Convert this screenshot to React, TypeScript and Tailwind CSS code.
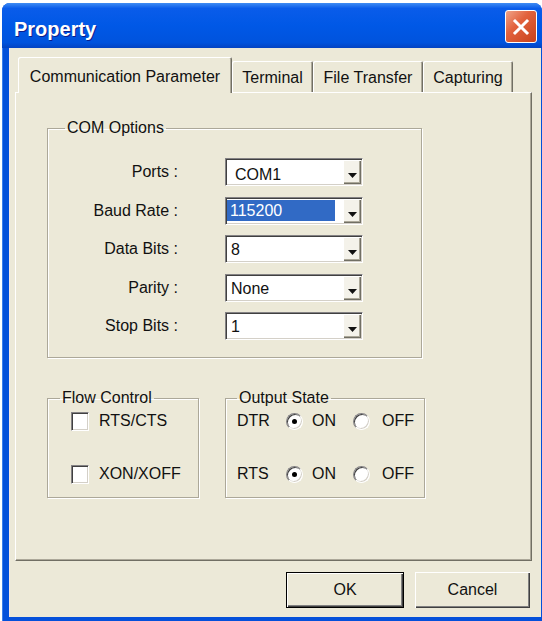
import { ReactNode } from "react";

const FONT = "font-['Liberation_Sans',Arial,sans-serif]";

type Option = {
    label: string,
    value: string,
    selected?: boolean,
    indent?: string
}

const comOptions: Option[] = [
    { label: "Ports :", value: "COM1", indent: "pl-[8px] pt-[6px]" },
    { label: "Baud Rate :", value: "115200", selected: true },
    { label: "Data Bits :", value: "8" },
    { label: "Parity :", value: "None" },
    { label: "Stop Bits :", value: "1" },
];

const tabs = ["Communication Parameter", "Terminal", "File Transfer", "Capturing"];
const tabWidths = ["w-[214px]", "w-[81px]", "w-[110px]", "w-[90px]"];

// sunken 3D edge used by combos, checkboxes and radios
const sunken = "border border-t-[#848284] border-l-[#848284] border-r-white border-b-white shadow-[inset_1px_1px_0_#404040,inset_-1px_-1px_0_#D4D0C8]";

function ComboBox({ option }: { option: Option }) {
    return (
        <div className={`flex h-[28px] w-[138px] bg-white p-[1px] ${sunken}`}>
            <div className="flex flex-1 items-center">
                {option.selected ? (
                    <span className="flex h-[21px] w-[108px] items-center bg-[#316AC5] pl-[3px] text-white">{option.value}</span>
                ) : (
                    <span className={option.indent ?? "pl-[4px] pt-[2px]"}>{option.value}</span>
                )}
            </div>
            <div className="flex w-[18px] items-center justify-center bg-[#F4F2EA] pt-[7px] shadow-[inset_1px_1px_0_#fff,inset_-1px_-1px_0_#716F64,inset_-2px_-2px_0_#ACA899]">
                <svg width="9" height="5" viewBox="0 0 9 5">
                    <path d="M0 0h9L4.5 5z" fill="#111" />
                </svg>
            </div>
        </div>
    );
}

function GroupBox({ title, className, legend, children }: { title: string, className: string, legend: string, children: ReactNode }) {
    return (
        <fieldset className={`border border-[#ACA899] shadow-[inset_1px_1px_0_#fff,1px_1px_0_#fff] ${className}`}>
            <legend className={`px-[2px] leading-[18px] ${legend}`}>{title}</legend>
            {children}
        </fieldset>
    );
}

function CheckBox({ label }: { label: string }) {
    return (
        <div className="flex h-[22px] items-center">
            <span className={`h-[19px] w-[18px] bg-white ${sunken}`} />
            <span className="ml-[10px]">{label}</span>
        </div>
    );
}

function Radio({ checked }: { checked?: boolean }) {
    return (
        <span className={`flex h-[17px] w-[17px] items-center justify-center rounded-full bg-white ${sunken}`}>
            {checked && <span className="h-[5px] w-[5px] rounded-full bg-black" />}
        </span>
    );
}

function OutputRow({ name }: { name: string }) {
    return (
        <div className="flex h-[22px] items-center">
            <span className="w-[49px]">{name}</span>
            <Radio checked />
            <span className="ml-[9px] w-[41px]">ON</span>
            <Radio />
            <span className="ml-[12px]">OFF</span>
        </div>
    );
}

function Button({ children, isDefault }: { children: ReactNode, isDefault?: boolean }) {
    const frame = isDefault
        ? "w-[118px] border border-black shadow-[inset_1px_1px_0_#fff,inset_-1px_-1px_0_#404040,inset_-2px_-2px_0_#808080]"
        : "w-[115px] shadow-[inset_1px_1px_0_#fff,inset_-1px_-1px_0_#404040,inset_-2px_-2px_0_#808080]";
    return (
        <button className={`flex h-[36px] items-center justify-center bg-[#ECE9D8] text-[#111] ${frame}`}>
            {children}
        </button>
    );
}

export default function App() {
    return (
        <div className={`h-[621px] w-[542px] overflow-hidden bg-white text-[16px] text-[#111] ${FONT}`}>
            <div className="ml-[2px] mt-[3px] flex h-[618px] w-[540px] flex-col rounded-t-[8px] bg-[#0450DA] shadow-[inset_1px_0_0_#3C7EEB]">
                {/* title bar */}
                <div className="flex h-[45px] items-start justify-between rounded-t-[8px] bg-[linear-gradient(#3F8CF3_0%,#0A5CEA_12%,#0058E6_50%,#0053DD_88%,#0343C2_100%)] pl-[12px] pr-[5px]">
                    <span className="pt-[15px] text-[20px] font-bold leading-[22px] text-white [text-shadow:1px_1px_0_#0A1E8C]">Property</span>
                    <div className="mt-[7px] flex h-[33px] w-[32px] items-center justify-center rounded-[3px] border border-white bg-[linear-gradient(135deg,#F0A48A_0%,#E2623D_40%,#C8421C_100%)]">
                        <svg width="18" height="18" viewBox="0 0 18 18">
                            <path d="M3 3l12 12M15 3L3 15" stroke="#fff" strokeWidth="3" strokeLinecap="square" />
                        </svg>
                    </div>
                </div>

                {/* dialog body */}
                <div className="mb-[4px] ml-[7px] mr-[1px] flex flex-1 flex-col bg-[#ECE9D8] pt-[9px] shadow-[inset_1px_0_0_#F7E6E2]">
                    <div className="ml-[6px] mr-[9px] flex flex-col">
                        <div className="flex items-end pl-[3px]">
                            {tabs.map((tab, i) => (
                                i === 0 ? (
                                    <div key={tab} className={`relative z-10 -mb-[1px] flex h-[36px] items-center justify-center rounded-t-[2px] bg-[#ECE9D8] pt-[3px] shadow-[inset_1px_1px_0_#fff,inset_-1px_0_0_#716F64,inset_-2px_0_0_#ACA899] ${tabWidths[i]}`}>
                                        {tab}
                                    </div>
                                ) : (
                                    <div key={tab} className={`flex h-[31px] items-center justify-center rounded-t-[2px] pt-[2px] shadow-[inset_1px_1px_0_#fff,inset_-1px_0_0_#716F64,inset_-2px_0_0_#ACA899] ${tabWidths[i]}`}>
                                        {tab}
                                    </div>
                                )
                            ))}
                        </div>

                        {/* tab page */}
                        <div className="flex h-[469px] flex-col border border-b-[#716F64] border-l-white border-r-[#716F64] border-t-white pl-[31px] pt-[26px] shadow-[inset_-1px_-1px_0_#ACA899]">
                            <GroupBox title="COM Options" legend="ml-[17px]" className="w-[375px] pb-[17px] pt-[21px]">
                                <div className="grid grid-cols-[130px_138px] items-center gap-x-[47px] gap-y-[10.5px]">
                                    {comOptions.map((option) => (
                                        <div key={option.label} className="contents">
                                            <span className="text-right">{option.label}</span>
                                            <ComboBox option={option} />
                                        </div>
                                    ))}
                                </div>
                            </GroupBox>

                            <div className="mt-[31px] flex gap-x-[26px]">
                                <GroupBox title="Flow Control" legend="ml-[12px]" className="w-[152px] pb-[12px] pt-[3px]">
                                    <div className="flex flex-col gap-y-[31px] pl-[23px]">
                                        <CheckBox label="RTS/CTS" />
                                        <CheckBox label="XON/XOFF" />
                                    </div>
                                </GroupBox>
                                <GroupBox title="Output State" legend="ml-[11px]" className="w-[200px] pb-[12px] pt-[3px]">
                                    <div className="flex flex-col gap-y-[31px] pl-[11px]">
                                        <OutputRow name="DTR" />
                                        <OutputRow name="RTS" />
                                    </div>
                                </GroupBox>
                            </div>
                        </div>

                        <div className="mt-[11px] flex justify-end gap-x-[11px] pr-[2px]">
                            <Button isDefault>OK</Button>
                            <Button>Cancel</Button>
                        </div>
                    </div>
                </div>
            </div>
        </div>
    );
}
